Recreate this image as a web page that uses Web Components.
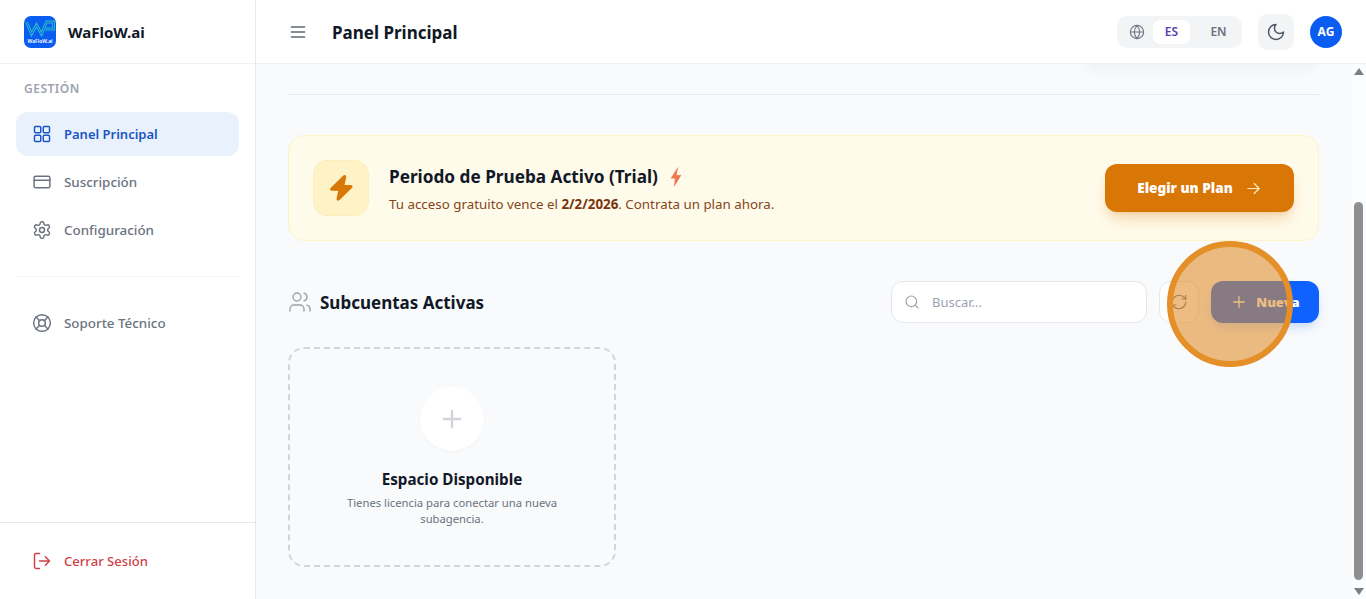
<!DOCTYPE html>
<html lang="es">
<head>
<meta charset="utf-8">
<title>WaFloW.ai</title>
<style>
html,body{margin:0;height:100%;overflow:hidden}
body{font-family:"Noto Sans","Liberation Sans",sans-serif;color:#111827;background:#f9fafb}
</style>
</head>
<body>
<app-shell>
  <side-bar slot="side"></side-bar>
  <top-bar slot="top"></top-bar>
  <main-panel slot="main">
    <trial-banner></trial-banner>
    <section-head></section-head>
    <empty-card></empty-card>
  </main-panel>
  <scroll-rail slot="rail"></scroll-rail>
  <focus-ring slot="over"></focus-ring>
</app-shell>
<script>
const ICONS={
 menu:'<path d="M4 6h16M4 12h16M4 18h16"/>',
 grid:'<rect x="3" y="3" width="7.5" height="7.5" rx="1.3"/><rect x="13.5" y="3" width="7.5" height="7.5" rx="1.3"/><rect x="3" y="13.5" width="7.5" height="7.5" rx="1.3"/><rect x="13.5" y="13.5" width="7.5" height="7.5" rx="1.3"/>',
 card:'<rect x="2.5" y="5" width="19" height="14" rx="2"/><path d="M2.5 10h19"/>',
 gear:'<path d="M12.22 2h-.44a2 2 0 0 0-2 2v.18a2 2 0 0 1-1 1.73l-.43.25a2 2 0 0 1-2 0l-.15-.08a2 2 0 0 0-2.73.73l-.22.38a2 2 0 0 0 .73 2.73l.15.1a2 2 0 0 1 1 1.72v.51a2 2 0 0 1-1 1.74l-.15.09a2 2 0 0 0-.73 2.73l.22.38a2 2 0 0 0 2.73.73l.15-.08a2 2 0 0 1 2 0l.43.25a2 2 0 0 1 1 1.73V20a2 2 0 0 0 2 2h.44a2 2 0 0 0 2-2v-.18a2 2 0 0 1 1-1.73l.43-.25a2 2 0 0 1 2 0l.15.08a2 2 0 0 0 2.73-.73l.22-.39a2 2 0 0 0-.73-2.73l-.15-.08a2 2 0 0 1-1-1.74v-.5a2 2 0 0 1 1-1.74l.15-.09a2 2 0 0 0 .73-2.73l-.22-.38a2 2 0 0 0-2.73-.73l-.15.08a2 2 0 0 1-2 0l-.43-.25a2 2 0 0 1-1-1.73V4a2 2 0 0 0-2-2z"/><circle cx="12" cy="12" r="3"/>',
 buoy:'<circle cx="12" cy="12" r="10"/><circle cx="12" cy="12" r="4"/><path d="m4.93 4.930 4.240 4.240M14.830 9.170l4.240-4.240M14.830 14.830l4.240 4.240M9.170 14.830l-4.240 4.240"/>',
 logout:'<path d="M9 21H5a2 2 0 0 1-2-2V5a2 2 0 0 1 2-2h4"/><path d="M16 17l5-5-5-5M21 12H9"/>',
 globe:'<circle cx="12" cy="12" r="10"/><path d="M2 12h20M12 2a15.3 15.3 0 0 1 4 10 15.3 15.3 0 0 1-4 10 15.3 15.3 0 0 1-4-10 15.3 15.3 0 0 1 4-10z"/>',
 moon:'<path d="M12 3a6 6 0 0 0 9 9 9 9 0 1 1-9-9Z"/>',
 arrow:'<path d="M4 12h16M13 5l7 7-7 7"/>',
 users:'<path d="M16 21v-2a4 4 0 0 0-4-4H6a4 4 0 0 0-4 4v2"/><circle cx="9" cy="7" r="4"/><path d="M22 21v-2a4 4 0 0 0-3-3.87M16 3.13a4 4 0 0 1 0 7.75"/>',
 search:'<circle cx="11" cy="11" r="8"/><path d="m21 21-4.3-4.3"/>',
 refresh:'<path d="M3 12a9 9 0 0 1 9-9 9.75 9.75 0 0 1 6.74 2.74L21 8"/><path d="M21 3v5h-5"/><path d="M21 12a9 9 0 0 1-9 9 9.75 9.75 0 0 1-6.74-2.74L3 16"/><path d="M8 16H3v5"/>',
 plus:'<path d="M5 12h14M12 5v14"/>',
 zap:'<path fill="currentColor" d="M14.500 4 5.500 12.800h6l-1.500 7 9-8.800h-6z"/>',
 spark:'<path fill="currentColor" stroke-width=".5" d="M14 1 6 13.500h5L10 23l8-13h-5.500z"/>'
};
function draw(el){const s=el.shadowRoot&&el.shadowRoot.querySelector('svg');if(s)s.innerHTML=ICONS[el.getAttribute('name')]||''}
function def(name,html,setup){
  const t=document.createElement('template');t.innerHTML=html;
  customElements.define(name,class extends HTMLElement{
    connectedCallback(){
      if(this.shadowRoot)return;
      this.attachShadow({mode:'open'}).appendChild(t.content.cloneNode(true));
      if(setup)setup.call(this,this.shadowRoot);
    }
  });
}
def('ui-icon',`<style>:host{display:inline-flex;flex:none;width:var(--s,20px);height:var(--s,20px)}svg{width:100%;height:100%;fill:none;stroke:currentColor;stroke-width:var(--w,1.75);stroke-linecap:round;stroke-linejoin:round;display:block}</style><svg viewBox="0 0 24 24"></svg>`,function(){draw(this)});

def('app-shell',`<style>
:host{display:block;position:relative;width:100%;height:100vh;overflow:hidden}
.root{display:grid;grid-template-columns:256px 1fr;height:100%}
.right{display:grid;grid-template-rows:64px 1fr;min-width:0;height:599px}
.body{display:grid;grid-template-columns:1fr 15px;min-height:0}
</style>
<div class="root"><slot name="side"></slot><div class="right"><slot name="top"></slot><div class="body"><slot name="main"></slot><slot name="rail"></slot></div></div></div><slot name="over"></slot>`);

def('wa-logo',`<style>:host{display:block;width:32px;height:32px;flex:none}
.b{width:32px;height:32px;border-radius:7px;background:#0b5cf0;overflow:hidden;display:flex;flex-direction:column;align-items:center}
svg{width:32px;height:22px;flex:none;fill:none;stroke-linejoin:miter;stroke-linecap:butt}
span{font:600 5px/6px "Noto Sans",sans-serif;color:#fff;white-space:nowrap}</style>
<div class="b"><svg viewBox="0 0 32 22"><path stroke="#27bfc6" stroke-width="2.800" d="M2.500 6 7.500 18 12.500 9 17.500 18 22.500 6H29.500V13H20"/><path stroke="#0b5cf0" stroke-width=".9" d="M2.500 6 7.500 18 12.500 9 17.500 18 22.500 6H29.500V13H20"/></svg><span>WaFloW.ai</span></div>`);

def('nav-item',`<style>
:host{display:flex;align-items:center;gap:12px;height:44px;padding:0 16px;border-radius:12px;color:#6b7280;font:500 13.4px/20px "Noto Sans",sans-serif;--s:20px}
:host([active]){background:#e9f1fd;color:#1a56c4;font-weight:600;font-size:13px}
:host([danger]){color:#cf3f46;font-size:13.1px}
</style><ui-icon></ui-icon><slot></slot>`,function(r){const i=r.querySelector('ui-icon');i.setAttribute('name',this.getAttribute('icon'));draw(i)});

def('side-bar',`<style>
:host{display:flex;flex-direction:column;height:599px;box-sizing:border-box;background:#fff;border-right:1px solid #e5e7eb}
.brand{height:64px;box-sizing:border-box;flex:none;display:flex;align-items:center;gap:12px;padding:0 24px;border-bottom:1px solid #f0f1f3;font:700 15px/24px "Noto Sans",sans-serif;color:#111827}
.nav{flex:1;display:flex;flex-direction:column;padding:17px 16px 0;gap:4px}
.lab{font:600 12px/16px "Noto Sans",sans-serif;letter-spacing:.5px;color:#9ca3af;padding:0 8px;margin-bottom:11px}
hr{border:0;border-top:1px solid #f3f4f6;margin:20px 0 20px}
.foot{flex:none;height:77px;box-sizing:border-box;border-top:1px solid #e5e7eb;padding:16px}
</style>
<div class="brand"><wa-logo></wa-logo><span>WaFloW.ai</span></div>
<div class="nav"><div class="lab">GESTIÓN</div>
<nav-item icon="grid" active>Panel Principal</nav-item>
<nav-item icon="card">Suscripción</nav-item>
<nav-item icon="gear">Configuración</nav-item>
<hr>
<nav-item icon="buoy">Soporte Técnico</nav-item></div>
<div class="foot"><nav-item icon="logout" danger>Cerrar Sesión</nav-item></div>`);

def('lang-switch',`<style>
:host{display:flex;align-items:center;height:32px;padding:0 5px 0 12px;background:#f3f4f6;border-radius:10px;font:600 12px/16px "Noto Sans",sans-serif;color:#6b7280;--s:16px;--w:1.6}
.o{width:37px;height:24px;display:flex;align-items:center;justify-content:center;border-radius:7px}
.on{background:#fff;color:#5b3fb0;margin-left:8px}
.off{margin-left:10px}
</style><ui-icon name="globe"></ui-icon><span class="o on">ES</span><span class="o off">EN</span>`);

def('top-bar',`<style>
:host{display:flex;align-items:center;box-sizing:border-box;height:64px;padding:0 24px 0 32px;background:#fff;border-bottom:1px solid #f0f1f3}
.m{color:#5f6672;--s:20px;--w:1.6;margin-right:24px}
h1{margin:2px 0 0;font:700 17px/28px "Noto Sans",sans-serif;color:#111827;flex:1}
.moon{width:36px;height:36px;border-radius:10px;background:#f3f4f6;display:flex;align-items:center;justify-content:center;color:#4b5563;margin:0 16px;--s:20px;--w:1.75}
.av{width:32px;height:32px;border-radius:50%;background:#0b5cf0;color:#fff;display:flex;align-items:center;justify-content:center;font:700 12px/16px "Noto Sans",sans-serif}
</style><ui-icon class="m" name="menu"></ui-icon><h1>Panel Principal</h1><lang-switch></lang-switch><div class="moon"><ui-icon name="moon"></ui-icon></div><div class="av">AG</div>`);

def('main-panel',`<style>
:host{display:block;position:relative;box-sizing:border-box;padding:30px 32px 0;background:#f9fafb;overflow:hidden;min-width:0}
hr{border:0;border-top:1px solid #e5e7eb;margin:0 0 40px}
.shade{position:absolute;left:830px;right:36px;top:-12px;height:12px;box-shadow:0 4px 14px rgba(0,0,0,.05)}
</style><div class="shade"></div><hr><slot></slot>`);

def('trial-banner',`<style>
:host{display:flex;align-items:center;box-sizing:border-box;height:106px;padding:0 24px;background:#fffbeb;border:1px solid #fef3c7;border-radius:16px;margin-bottom:40px}
.ic{width:56px;height:56px;border-radius:14px;background:#fef3c7;border:1px solid #fdeebc;box-sizing:border-box;display:flex;align-items:center;justify-content:center;color:#d97706;--s:34px;--w:2.400;margin-right:20px}
.t{flex:1;min-width:0;margin-top:2px}
h2{margin:0;font:700 17.200px/24px "Noto Sans",sans-serif;color:#111827;display:flex;align-items:center;gap:8px}
h2 ui-icon{color:#f0764b;--s:20px}
p{margin:6px 0 0;font:400 13.350px/18px "Noto Sans",sans-serif;color:#85461a}
b{font-weight:700;color:#78350f}
button{all:unset;box-sizing:border-box;display:flex;align-items:center;justify-content:center;gap:12px;width:189px;height:48px;border-radius:12px;background:#d97706;color:#fff;font:900 13.600px/20px "Noto Sans",sans-serif;box-shadow:0 10px 15px -3px rgba(217,119,6,.25),0 4px 6px -4px rgba(217,119,6,.25);--s:17px;--w:1.75}
button ui-icon{color:#fde7c0}
</style><div class="ic"><ui-icon name="zap"></ui-icon></div><div class="t"><h2>Periodo de Prueba Activo (Trial) <ui-icon name="spark"></ui-icon></h2><p>Tu acceso gratuito vence el <b>2/2/2026</b>. Contrata un plan ahora.</p></div><button>Elegir un Plan<ui-icon name="arrow"></ui-icon></button>`);

def('section-head',`<style>
:host{display:flex;align-items:center;height:42px;margin-bottom:24px}
.u{color:#9ca3af;--s:24px;--w:1.4;margin-right:8px}
h2{margin:2px 0 0;flex:1;font:700 17px/24px "Noto Sans",sans-serif;color:#111827}
.s{width:256px;height:42px;box-sizing:border-box;background:#fff;border:1px solid #e5e7eb;border-radius:12px;display:flex;align-items:center;gap:12px;padding:0 12px;color:#9ca3af;font:400 13px/18px "Noto Sans",sans-serif;--s:16px;--w:1.75}
.r{width:40px;height:42px;box-sizing:border-box;background:#fff;border:1px solid #e5e7eb;border-radius:12px;margin:0 12px;display:flex;align-items:center;justify-content:center;color:#6b7280;--s:18px;--w:1.6}
.n{width:108px;height:42px;box-sizing:border-box;border-radius:12px;background:#0f62fe;color:#fff;display:flex;align-items:center;justify-content:center;gap:8px;font:900 13px/18px "Noto Sans",sans-serif;box-shadow:0 6px 12px -3px rgba(15,98,254,.25);--s:18px;--w:1.75}
</style><ui-icon class="u" name="users"></ui-icon><h2>Subcuentas Activas</h2><div class="s"><ui-icon name="search"></ui-icon><span>Buscar...</span></div><div class="r"><ui-icon name="refresh"></ui-icon></div><div class="n"><ui-icon name="plus"></ui-icon><span>Nueva</span></div>`);

def('empty-card',`<style>
:host{display:flex;flex-direction:column;align-items:center;box-sizing:border-box;width:328px;height:220px;border:2px dashed #d1d5db;border-radius:16px;padding:38px 24px 0;text-align:center}
.c{width:64px;height:64px;border-radius:50%;background:#fff;box-shadow:0 1px 2px rgba(0,0,0,.04);display:flex;align-items:center;justify-content:center;color:#d1d5db;--s:28px;--w:2;margin-bottom:16px}
h3{margin:0 0 4px;font:700 15.200px/24px "Noto Sans",sans-serif;color:#111827}
p{margin:0;font:400 11.250px/16px "Noto Sans",sans-serif;color:#6b7280;max-width:240px}
</style><div class="c"><ui-icon name="plus"></ui-icon></div><h3>Espacio Disponible</h3><p>Tienes licencia para conectar una nueva subagencia.</p>`);

def('scroll-rail',`<style>
:host{display:flex;flex-direction:column;align-items:center;background:#fbfcfd;height:535px;justify-content:space-between}
.a{width:0;height:0;border-left:5px solid transparent;border-right:5px solid transparent;margin-top:4px;border-bottom:7px solid #7f7f7f}
.d{border-bottom:0;border-top:7px solid #7f7f7f;margin:0 0 4px}
.th{position:absolute;top:202px;height:378px;width:9px;border-radius:5px;background:#8f8f8f}
</style><div class="a"></div><div class="th"></div><div class="a d"></div>`);

def('focus-ring',`<style>
:host{position:absolute;left:1167px;top:241px;width:126px;height:126px;box-sizing:border-box;border:6px solid #e48f27;border-radius:50%;background:rgba(224,140,40,.58)}
</style>`);
</script>
</body>
</html>
